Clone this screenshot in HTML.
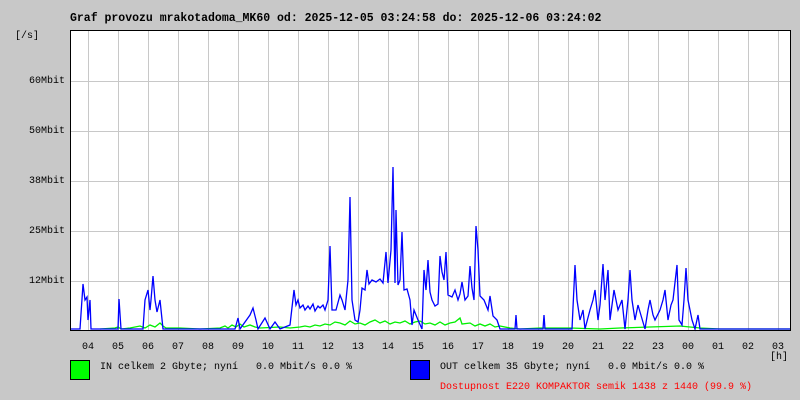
<!DOCTYPE html>
<html><head><meta charset="utf-8"><style>
body{margin:0;background:#c8c8c8;width:800px;height:400px;overflow:hidden;position:relative;font-family:"Liberation Mono",monospace;}
.t{position:absolute;white-space:pre;font-size:10px;line-height:10px;color:#000}
</style></head><body>
<div class="t" style="left:70px;top:12px;font-size:11.5px;font-weight:bold;line-height:14px">Graf provozu mrakotadoma_MK60 od: 2025-12-05 03:24:58 do: 2025-12-06 03:24:02</div>
<div class="t" style="left:15px;top:32px">[/s]</div>
<div class="t" style="left:29px;top:77px">60Mbit</div>
<div class="t" style="left:29px;top:127px">50Mbit</div>
<div class="t" style="left:29px;top:177px">38Mbit</div>
<div class="t" style="left:29px;top:227px">25Mbit</div>
<div class="t" style="left:29px;top:277px">12Mbit</div>
<svg style="position:absolute;left:0;top:0" width="800" height="400">
<rect x="70" y="30" width="720" height="300" fill="#fff"/>
<g stroke="#c8c8c8" stroke-width="1">
<path d="M70 81.5H791M70 131.5H791M70 181.5H791M70 231.5H791M70 281.5H791"/>
<path d="M88.5 30V330M118.5 30V330M148.5 30V330M178.5 30V330M208.5 30V330M238.5 30V330M268.5 30V330M298.5 30V330M328.5 30V330M358.5 30V330M388.5 30V330M418.5 30V330M448.5 30V330M478.5 30V330M508.5 30V330M538.5 30V330M568.5 30V330M598.5 30V330M628.5 30V330M658.5 30V330M688.5 30V330M718.5 30V330M748.5 30V330M778.5 30V330"/>
</g>
<g fill="none" stroke-width="1.3">
<polyline stroke="#00f000" points="100,329 115,328 118,327 121,329 130,328 140,326 145,328 150,325 155,327 160,323 163,326 166,328 180,328 200,329 220,328 225,326 228,328 232,325 236,327 240,324 244,327 250,325 255,327 260,328 280,327 290,328 300,327 305,326 310,327 315,325 320,326 325,324 330,325 335,322 340,323 345,325 350,321 355,324 360,323 365,325 370,322 375,320 380,323 385,321 390,324 395,322 400,323 405,321 410,324 415,322 420,321 425,324 430,323 435,325 440,322 445,325 450,323 455,322 460,318 462,324 470,323 475,326 480,324 485,326 490,324 495,327 500,326 510,328 520,329 540,328 570,328 600,329 620,328 650,327 680,326 700,328 720,329 790,329"/>
<polyline stroke="#0000ff" points="70,329 80,329 83,284 85,300 87,297 88,320 90,300 91,329 100,329 118,329 119,299 121,329 143,329 145,300 148,290 150,310 151,300 153,276 155,300 157,312 160,300 163,329 170,329 235,329 238,318 240,329 250,315 253,308 256,320 258,329 265,318 270,329 275,322 280,329 290,325 294,290 296,305 298,300 300,308 303,305 305,310 308,306 310,309 313,304 315,311 318,306 320,308 323,305 325,310 328,300 330,246 332,310 336,310 340,295 342,300 345,310 348,280 350,197 352,300 355,320 358,322 360,310 362,288 365,290 367,270 369,284 372,280 376,282 380,279 383,283 386,252 388,283 391,250 393,167 395,283 396,210 398,285 400,280 402,232 404,290 407,289 410,300 412,325 414,310 418,320 422,329 424,270 426,290 428,260 430,292 432,300 435,306 438,304 440,256 442,272 444,280 446,252 448,295 452,297 455,290 458,300 460,294 462,282 465,300 468,296 470,266 472,288 474,300 476,226 478,250 480,296 484,300 488,310 490,296 493,316 497,320 500,329 515,329 516,315 517,329 543,329 544,315 545,329 572,329 575,265 577,300 580,320 583,310 585,329 590,310 593,300 595,290 598,320 600,305 603,264 605,300 608,270 610,320 612,305 614,290 618,310 622,300 625,329 628,300 630,270 632,300 635,320 638,305 640,312 645,329 648,310 650,300 653,315 655,320 660,310 663,300 665,290 668,320 671,305 673,300 677,265 679,320 682,325 684,300 686,268 688,300 692,320 695,329 698,315 700,329 790,329"/>
</g>
<path d="M70.5 30V330.5H790.5V30" fill="none" stroke="#000"/>
<path d="M70 30.5H790" stroke="#000"/>
<rect x="70.5" y="360.5" width="19" height="19" fill="#00ff00" stroke="#000"/>
<rect x="410.5" y="360.5" width="19" height="19" fill="#0000ff" stroke="#000"/>
</svg>
<div class="t" style="left:82px;top:343px">04</div><div class="t" style="left:112px;top:343px">05</div><div class="t" style="left:142px;top:343px">06</div><div class="t" style="left:172px;top:343px">07</div><div class="t" style="left:202px;top:343px">08</div><div class="t" style="left:232px;top:343px">09</div><div class="t" style="left:262px;top:343px">10</div><div class="t" style="left:292px;top:343px">11</div><div class="t" style="left:322px;top:343px">12</div><div class="t" style="left:352px;top:343px">13</div><div class="t" style="left:382px;top:343px">14</div><div class="t" style="left:412px;top:343px">15</div><div class="t" style="left:442px;top:343px">16</div><div class="t" style="left:472px;top:343px">17</div><div class="t" style="left:502px;top:343px">18</div><div class="t" style="left:532px;top:343px">19</div><div class="t" style="left:562px;top:343px">20</div><div class="t" style="left:592px;top:343px">21</div><div class="t" style="left:622px;top:343px">22</div><div class="t" style="left:652px;top:343px">23</div><div class="t" style="left:682px;top:343px">00</div><div class="t" style="left:712px;top:343px">01</div><div class="t" style="left:742px;top:343px">02</div><div class="t" style="left:772px;top:343px">03</div>
<div class="t" style="left:770px;top:353px">[h]</div>
<div class="t" style="left:100px;top:363px">IN celkem 2 Gbyte; nyní   0.0 Mbit/s 0.0 %</div>
<div class="t" style="left:440px;top:363px">OUT celkem 35 Gbyte; nyní   0.0 Mbit/s 0.0 %</div>
<div class="t" style="left:440px;top:383px;color:#f00">Dostupnost E220 KOMPAKTOR semik 1438 z 1440 (99.9 %)</div>
</body></html>
